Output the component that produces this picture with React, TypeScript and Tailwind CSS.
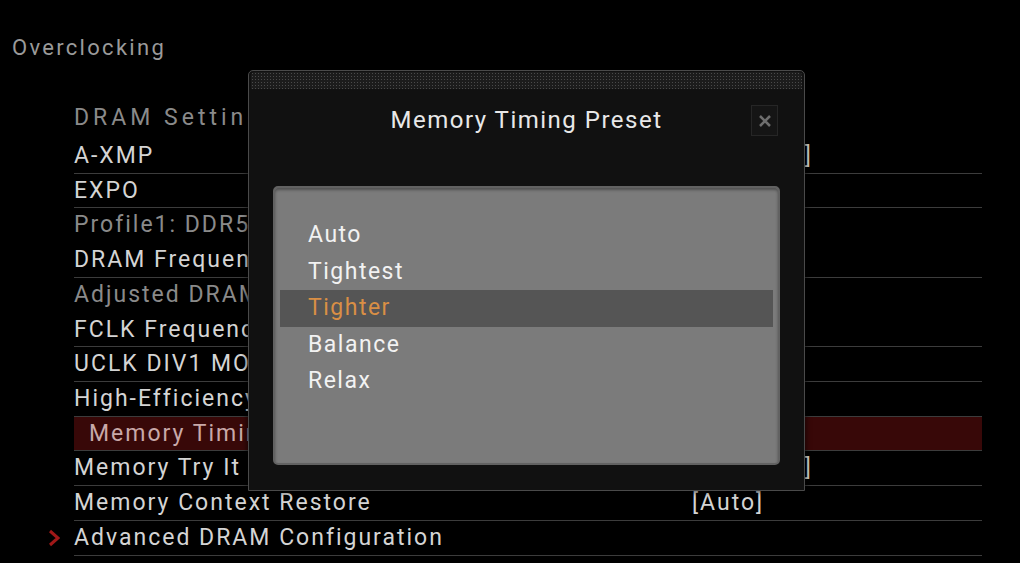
import React from "react";

type Row = { label: string; value?: string; dim?: boolean; line?: boolean; active?: boolean; sub?: boolean };

const rows: Row[] = [
  { label: "A-XMP", value: "[Disabled]", line: true },
  { label: "EXPO", value: "[Profile1]", line: true },
  { label: "Profile1: DDR5-6000 30-38-38-96 1.35V", dim: true, line: false },
  { label: "DRAM Frequency", value: "[Auto]", line: true },
  { label: "Adjusted DRAM Frequency", dim: true, line: false },
  { label: "FCLK Frequency", value: "[Auto]", line: true },
  { label: "UCLK DIV1 MODE", value: "[Auto]", line: true },
  { label: "High-Efficiency Mode", value: "[Auto]", line: true },
  { label: "Memory Timing Preset", value: "[Tighter]", line: true, active: true },
  { label: "Memory Try It !", value: "[Disabled]", line: true },
  { label: "Memory Context Restore", value: "[Auto]", line: true },
  { label: "Advanced DRAM Configuration", line: true, sub: true },
];

const options = ["Auto", "Tightest", "Tighter", "Balance", "Relax"];

export default function App() {
  return (
    <div
      className="relative w-[1020px] h-[563px] overflow-hidden bg-black text-[#d4d4d4]"
      style={{ fontFamily: "Roboto, 'Liberation Sans', sans-serif" }}
    >
      <div className="pl-[12px] pt-[33px] text-[22px] leading-[30px] tracking-[2.3px] text-[#9a9a9a]">Overclocking</div>

      <div className="ml-[48px] mr-[38px] mt-[37px] flex flex-col">
        <div className="pl-[26px] h-[37px] flex items-center text-[23px] tracking-[4px] text-[#8a8a8a]">DRAM Setting</div>
        <div className="h-[2px]" />
        {rows.map((r, i) => (
          <div key={i} className="flex h-[34.73px]">
            <div className="w-[26px] flex items-center">
              {r.sub && (
                <svg width="12" height="18" viewBox="0 0 12 18">
                  <path d="M2 2 L10 9 L2 16" stroke="#a01818" strokeWidth="3" fill="none" />
                </svg>
              )}
            </div>
            <div
              className={
                "flex-1 grid grid-cols-[618px_1fr] items-center text-[23px] tracking-[2px] whitespace-nowrap " +
                (r.line ? "border-b border-[#3c3c3c] " : "border-b border-transparent ") +
                (r.active ? "bg-[#380808] text-[#c9a9a9] " : "") +
                (r.dim ? "text-[#8a8a8a] " : "")
              }
            >
              <span className={r.active ? "pl-[15px]" : ""}>{r.label}</span>
              <span>{r.value ?? ""}</span>
            </div>
          </div>
        ))}
      </div>

      {/* Modal dialog overlay */}
      <div className="absolute left-[248px] top-[70px] w-[557px] h-[421px] rounded-t-[5px] border border-[#4a4a4a] bg-[#111111] shadow-[0_0_6px_rgba(0,0,0,0.8)] flex flex-col">
        <div className="h-[17px] mx-[2px] mt-[1px] rounded-t-[4px] bg-[#1c1c1c] bg-[radial-gradient(#4a4a4a_0.8px,transparent_1px)] bg-[length:3px_3px]" />
        <div className="h-[63px] grid grid-cols-[1fr_auto_1fr] items-center">
          <div />
          <span className="text-[24px] tracking-[1.5px] text-[#e8e8e8] mb-[1px]">Memory Timing Preset</span>
          <div className="flex justify-end pr-[26px]">
            <div className="w-[27px] h-[31px] border border-[#262626] bg-[#151515] flex items-center justify-center">
              <svg width="14" height="14" viewBox="0 0 14 14">
                <path d="M2 2 L12 12 M12 2 L2 12" stroke="#6e6e6e" strokeWidth="2.5" />
              </svg>
            </div>
          </div>
        </div>
        <div className="mx-[24px] mt-[34px] h-[279px] rounded-[5px] bg-[#7b7b7b] border-2 border-[#626262] shadow-[inset_0_2px_3px_rgba(0,0,0,0.35)] pt-[29px] px-[5px] flex flex-col">
          {options.map((o) => (
            <div
              key={o}
              className={
                "h-[36.5px] flex items-center pl-[28px] text-[23px] tracking-[1.5px] " +
                (o === "Tighter" ? "bg-[#555555] text-[#d98f45]" : "text-[#f2f2f2]")
              }
            >
              {o}
            </div>
          ))}
        </div>
      </div>
    </div>
  );
}
